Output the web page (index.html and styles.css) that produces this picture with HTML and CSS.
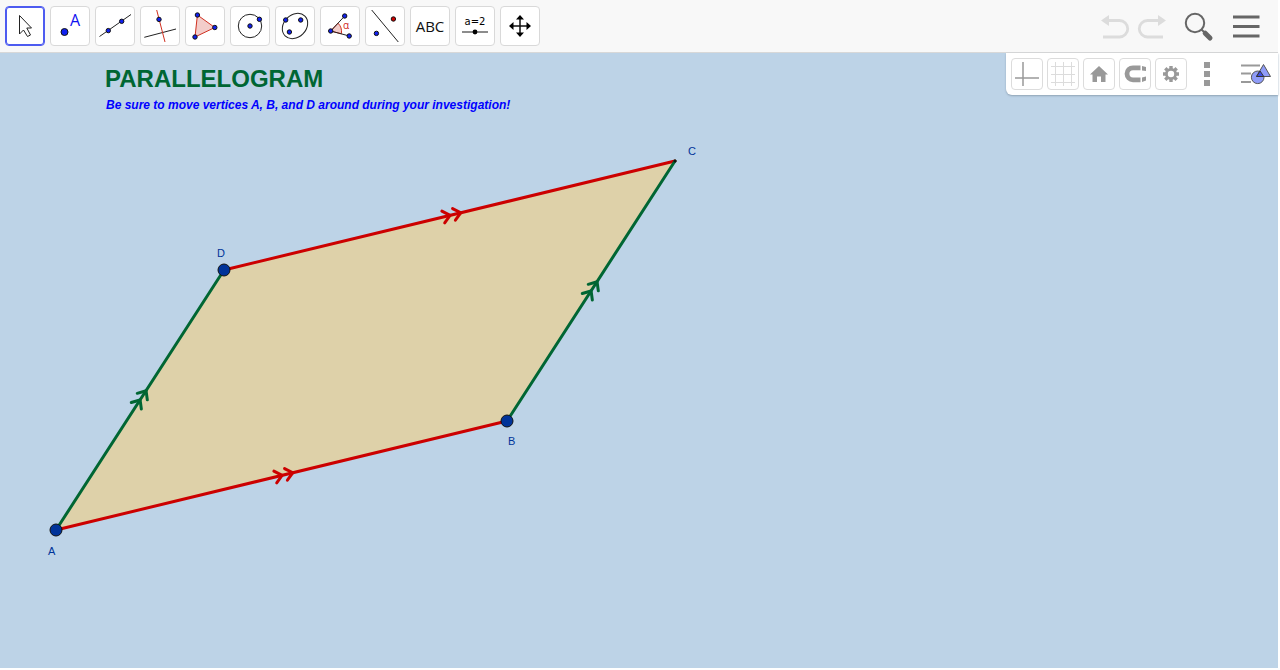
FILE: index.html
```html
<!DOCTYPE html>
<html lang="en">
<head>
    <meta charset="UTF-8">
    <title>Parallelogram</title>
    <link rel="stylesheet" href="styles.css">
</head>
<body>
    <header class="toolbar">
        <div class="tools">
            <button type="button" class="tool selected" aria-label="Move">
                <svg viewBox="1 1 38 38"><path class="cursor" d="M14.5 9.5V28L18.5 24L22.5 30.5L25.5 29L21.8 22H26.5Z"/></svg>
            </button>
            <button type="button" class="tool" aria-label="Point">
                <svg viewBox="1 1 38 38"><circle class="dot" cx="14.5" cy="26" r="3.5"/><text class="point-name" x="20" y="20">A</text></svg>
            </button>
            <button type="button" class="tool" aria-label="Line">
                <svg viewBox="1 1 38 38"><path class="thin" d="M4.5 30.5L36 8.5"/><circle class="dot" cx="13.3" cy="24.6" r="2.2"/><circle class="dot" cx="26.7" cy="15.3" r="2.2"/></svg>
            </button>
            <button type="button" class="tool" aria-label="Perpendicular line">
                <svg viewBox="1 1 38 38"><path class="thin" d="M4.3 31.3L36 23"/><path class="thin red" d="M16.7 4L25 36"/><circle class="dot" cx="19" cy="13.4" r="2.2"/></svg>
            </button>
            <button type="button" class="tool" aria-label="Polygon">
                <svg viewBox="1 1 38 38"><path class="thin red pink" d="M12.4 9L29.8 21.5L10 31Z"/><circle class="dot" cx="12.4" cy="9" r="2.2"/><circle class="dot" cx="29.8" cy="21.5" r="2.2"/><circle class="dot" cx="10" cy="31" r="2.2"/></svg>
            </button>
            <button type="button" class="tool" aria-label="Circle with center">
                <svg viewBox="1 1 38 38"><circle class="thin" cx="20" cy="20" r="11.7"/><circle class="dot" cx="20" cy="20" r="2.2"/><circle class="dot" cx="29.4" cy="13.3" r="2.2"/></svg>
            </button>
            <button type="button" class="tool" aria-label="Ellipse">
                <svg viewBox="1 1 38 38"><ellipse class="thin" cx="20" cy="20" rx="14" ry="11.2" transform="rotate(-45 20 20)"/><circle class="dot" cx="10.7" cy="14" r="2.2"/><circle class="dot" cx="25.7" cy="14" r="2.2"/><circle class="dot" cx="14.4" cy="26" r="2.2"/></svg>
            </button>
            <button type="button" class="tool" aria-label="Angle">
                <svg viewBox="1 1 38 38"><path class="thin red pink" d="M10.7 25L18 17.2Q22.3 21.3 21.4 27.8Z"/><path class="thin" d="M24.7 10L10.7 25L29.3 30"/><circle class="dot" cx="10.7" cy="25" r="2.2"/><circle class="dot" cx="24.7" cy="10" r="2.2"/><circle class="dot" cx="29.2" cy="30" r="2.2"/><text class="alpha" x="23" y="23">α</text></svg>
            </button>
            <button type="button" class="tool" aria-label="Reflect about line">
                <svg viewBox="1 1 38 38"><path class="thin" d="M6.7 4L33.3 36"/><circle class="dot" cx="11.4" cy="27.4" r="2.2"/><circle class="dot red-dot" cx="28.4" cy="13" r="2.2"/></svg>
            </button>
            <button type="button" class="tool" aria-label="Text">
                <svg viewBox="1 1 38 38"><text class="abc" x="20" y="26" text-anchor="middle">ABC</text></svg>
            </button>
            <button type="button" class="tool" aria-label="Slider">
                <svg viewBox="1 1 38 38"><text class="slider-name" x="20" y="19" text-anchor="middle">a=2</text><path class="slider-line" d="M7 26H33"/><circle cx="20" cy="26" r="2.4"/></svg>
            </button>
            <button type="button" class="tool" aria-label="Move graphics view">
                <svg viewBox="1 1 38 38"><path class="arrows-line" d="M20 12V28M12 20H28"/><path d="M20 9L24 13.5H16ZM20 31L16 26.5H24ZM9 20L13.5 16V24ZM31 20L26.5 24V16Z"/></svg>
            </button>
        </div>
        <div class="actions">
            <button type="button" class="action" aria-label="Undo">
                <svg viewBox="0 0 32 32"><path class="undo-line" d="M9 10.5H21.5A8.2 8.2 0 0 1 21.5 27H5"/><path class="undo-head" d="M3 10.5L11 5V16Z"/></svg>
            </button>
            <button type="button" class="action" aria-label="Redo">
                <svg viewBox="0 0 32 32"><path class="undo-line" d="M25 10.5H13.5A8.2 8.2 0 0 0 13.5 27H29"/><path class="undo-head" d="M32 10.5L24 5V16Z"/></svg>
            </button>
            <button type="button" class="action search" aria-label="Search">
                <svg viewBox="0 0 32 32"><circle class="lens" cx="13" cy="13" r="9.2"/><path class="neck" d="M19.5 19.5L22 22"/><path class="handle" d="M23.2 23.2L28 28"/></svg>
            </button>
            <button type="button" class="action" aria-label="Menu">
                <svg viewBox="0 0 32 32"><path class="bars" d="M3 7H29.5M3 16.5H29.5M3 26H29.5"/></svg>
            </button>
        </div>
    </header>

    <main class="board">
        <h1>PARALLELOGRAM</h1>
        <p>Be sure to move vertices A, B, and D around during your investigation!</p>

        <svg class="construction">
            <defs>
                <path id="chevrons" d="M-10.5 -6L-3.5 0L-10.5 6M.5 -6L7.5 0L.5 6"/>
            </defs>
            <path class="area" d="M56 477L507 368L675 108L224 217Z"/>
            <path class="side crimson" d="M56 477L507 368M224 217L675 108"/>
            <path class="side green" d="M56 477L224 217M507 368L675 108"/>
            <use href="#chevrons" class="side crimson" transform="translate(285.5 421.5) rotate(-13.6)"/>
            <use href="#chevrons" class="side crimson" transform="translate(453.5 161.5) rotate(-13.6)"/>
            <use href="#chevrons" class="side green" transform="translate(142 344) rotate(-57.1)"/>
            <use href="#chevrons" class="side green" transform="translate(593 235) rotate(-57.1)"/>
            <circle class="corner" cx="675" cy="108" r="1.5"/>
            <circle class="vertex" cx="56" cy="477" r="6"/>
            <circle class="vertex" cx="507" cy="368" r="6"/>
            <circle class="vertex" cx="224" cy="217" r="6"/>
            <text class="name" x="48" y="502">A</text>
            <text class="name" x="508" y="392">B</text>
            <text class="name" x="688" y="102">C</text>
            <text class="name" x="217" y="204">D</text>
        </svg>

        <div class="stylebar">
            <button type="button" class="style-btn" aria-label="Axes">
                <svg viewBox="1 1 30 30"><path class="axes" d="M12 4V28M4 20H28"/></svg>
            </button>
            <button type="button" class="style-btn" aria-label="Grid">
                <svg viewBox="1 1 30 30"><path class="grid" d="M8.5 4V28M16.5 4V28M24.5 4V28M4 8.5H28M4 16.5H28M4 24.5H28"/></svg>
            </button>
            <button type="button" class="style-btn" aria-label="Standard view">
                <svg viewBox="1 1 30 30"><path d="M16 8L25 16.5H22.5V24H18V18.5H14V24H9.5V16.5H7Z"/></svg>
            </button>
            <button type="button" class="style-btn" aria-label="Point capturing">
                <svg viewBox="1 1 30 30"><path class="magnet" d="M21.5 9.8H14A6 6 0 0 0 14 21.8H21.5"/><path d="M23 8L27 9V13L23 12.5ZM23 19.5L27 18.5V22.5L23 24Z"/></svg>
            </button>
            <button type="button" class="style-btn" aria-label="Settings">
                <svg viewBox="1 1 30 30"><circle class="gear" cx="16" cy="16" r="4.6"/><path class="teeth" d="M16 8V11M16 21V24M8 16H11M21 16H24M10.3 10.3L12.4 12.4M19.6 19.6L21.7 21.7M10.3 21.7L12.4 19.6M19.6 12.4L21.7 10.3"/></svg>
            </button>
            <button type="button" class="style-btn plain" aria-label="More">
                <svg viewBox="1 1 30 30"><path d="M13 4H19V10H13ZM13 13H19V19H13ZM13 22H19V28H13Z"/></svg>
            </button>
            <button type="button" class="style-btn plain views" aria-label="Algebra view">
                <svg viewBox="1 1 30 30"><path class="rows" d="M1 7.5H20M1 15.5H11M1 24H11"/><circle class="shape" cx="17.7" cy="19.3" r="6.3"/><path class="shape" d="M23.5 6.5L30.5 18.5H16.5Z"/><path class="overlap" d="M20 13L23.8 18.5H16.5Z"/></svg>
            </button>
        </div>
    </main>
</body>
</html>
```
FILE: styles.css
```css
* {
    box-sizing: border-box;
}
body {
    margin: 0;
    padding: 0 2px 2px 0;
    min-height: 100vh;
    display: flex;
    flex-direction: column;
    font-family: "Liberation Sans", Arial, sans-serif;
    background-color: #fff;
}
button {
    padding: 0;
    border: none;
    background: none;
    cursor: pointer;
}
svg {
    display: block;
}

/* top toolbar */
.toolbar {
    display: flex;
    justify-content: space-between;
    align-items: center;
    height: 53px;
    padding: 0 16px 0 5px;
    background-color: #f8f8f8;
    border-bottom: 1px solid #d8d8d8;
}
.tools {
    display: flex;
    gap: 5px;
}
.tool {
    width: 40px;
    height: 40px;
    background-color: #fff;
    border: 1px solid #d9d9d9;
    border-radius: 4px;
}
.tool svg {
    width: 38px;
    height: 38px;
}
.tool.selected {
    border-color: #4d5bf0;
    box-shadow: inset 0 0 0 1px #4d5bf0;
}
.cursor {
    fill: #fff;
    stroke: #222;
}
.thin {
    fill: none;
    stroke: #222;
}
.red {
    stroke: #d03020;
}
.pink {
    fill: #f3cdca;
}
.dot {
    fill: #1020f0;
    stroke: #111;
}
.red-dot {
    fill: #d00000;
}
.point-name {
    font-family: "Open Sans", sans-serif;
    font-size: 16px;
    fill: #1010f0;
}
.alpha {
    font-family: "Open Sans", sans-serif;
    font-size: 10px;
    fill: #d02020;
}
.abc {
    font-family: "Open Sans", sans-serif;
    font-size: 15px;
    fill: #111;
}
.slider-name {
    font-family: "DejaVu Sans", sans-serif;
    font-size: 10px;
}
.slider-line {
    stroke: #666;
    stroke-width: 1.5;
}
.arrows-line {
    stroke: #111;
    stroke-width: 1.5;
}

/* undo, redo, search, menu */
.actions {
    display: flex;
    align-items: center;
    gap: 4px;
}
.action svg {
    width: 32px;
    height: 32px;
}
.action.search {
    margin: 0 12px;
}
.undo-line {
    fill: none;
    stroke: #dcdcdc;
    stroke-width: 2.8;
}
.undo-head {
    fill: #dcdcdc;
}
.lens {
    fill: none;
    stroke: #666;
    stroke-width: 2;
}
.neck {
    stroke: #666;
    stroke-width: 2;
}
.handle {
    stroke: #666;
    stroke-width: 5;
    stroke-linecap: round;
}
.bars {
    stroke: #666;
    stroke-width: 3;
}

/* graphics view */
.board {
    position: relative;
    flex: 1;
    min-height: 560px;
    padding: 11px 0 0 105px;
    background-color: #bdd3e7;
}
h1 {
    margin: 0;
    font-size: 24px;
    line-height: 29px;
    color: #006633;
}
p {
    margin: 4px 0 0 1px;
    font-size: 12px;
    line-height: 16px;
    font-weight: bold;
    font-style: italic;
    color: #0000ff;
}
.construction {
    position: absolute;
    top: 0;
    left: 0;
    width: 100%;
    height: 100%;
}
.area {
    fill: #ded1a9;
}
.side {
    fill: none;
    stroke-width: 3;
    stroke-linecap: round;
}
.crimson {
    stroke: #cc0000;
}
.green {
    stroke: #006633;
}
.vertex {
    fill: #003399;
    stroke: #111;
}
.corner {
    fill: #111;
}
.name {
    font-size: 11px;
    fill: #003399;
}

/* style bar over the board */
.stylebar {
    position: absolute;
    top: 0;
    right: 0;
    display: flex;
    gap: 4px;
    padding: 5px 6px 5px 5px;
    background-color: #fff;
    border-bottom-left-radius: 6px;
    box-shadow: 0 1px 2px #8fa3b5;
}
.style-btn {
    width: 32px;
    height: 32px;
    border: 1px solid #dcdcdc;
    border-radius: 4px;
}
.style-btn svg {
    width: 30px;
    height: 30px;
    fill: #999;
    overflow: visible;
}
.style-btn.plain {
    border-color: transparent;
}
.views {
    margin-left: 13px;
}
.axes {
    stroke: #999;
    stroke-width: 1.5;
}
.grid {
    stroke: #dcdcdc;
}
.magnet {
    fill: none;
    stroke: #999;
    stroke-width: 4.8;
}
.gear {
    fill: none;
    stroke: #999;
    stroke-width: 2.8;
}
.teeth {
    stroke: #999;
    stroke-width: 3.4;
}
.rows {
    stroke: #999;
    stroke-width: 2;
}
.shape {
    fill: #8f9cf8;
    stroke: #555;
}
.overlap {
    fill: #4050e8;
    stroke: #333;
}
```
